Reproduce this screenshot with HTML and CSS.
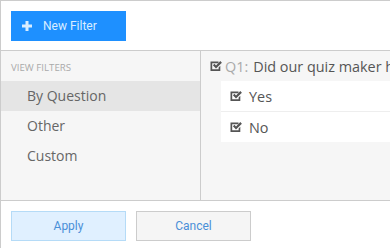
FILE: index.html
```html
<!doctype html>
<html lang="en-us">
<head>
<title>View Filters</title>
<meta http-equiv="Content-Type" content="text/html; charset=utf-8">
<link rel="stylesheet" href="styles.css">
</head>
<body>

<div class="panel">

  <div class="head">
    <button class="btn-new">
      <svg class="plus" width="10" height="10" viewBox="0 0 10 10"><path d="M3.5 0h3v3.5H10v3H6.5V10h-3V6.5H0v-3h3.5z"/></svg>
      New Filter
    </button>
  </div>

  <div class="main">
    <div class="side">
      <div class="side-title">VIEW FILTERS</div>
      <div class="side-item on">By Question</div>
      <div class="side-item">Other</div>
      <div class="side-item">Custom</div>
    </div>

    <div class="content">
      <div class="q-row">
        <svg class="chk" viewBox="0 0 12 12"><path d="M0.5 1.5h8v1.7H2.2v6.1h6.4V7.4l1.7-1.7V11H0.5z"/><path d="M2.9 5.3l1.6-1.5 1.5 1.6 4.3-4.3 1.6 1.6-5.9 5.9z"/></svg>
        <span class="qnum">Q1:</span><span class="qtxt">Did our quiz maker help you create your quiz?</span>
      </div>
      <div class="answers">
        <div class="a-row">
          <svg class="chk" viewBox="0 0 12 12"><path d="M0.5 1.5h8v1.7H2.2v6.1h6.4V7.4l1.7-1.7V11H0.5z"/><path d="M2.9 5.3l1.6-1.5 1.5 1.6 4.3-4.3 1.6 1.6-5.9 5.9z"/></svg>
          Yes
        </div>
        <div class="a-row">
          <svg class="chk" viewBox="0 0 12 12"><path d="M0.5 1.5h8v1.7H2.2v6.1h6.4V7.4l1.7-1.7V11H0.5z"/><path d="M2.9 5.3l1.6-1.5 1.5 1.6 4.3-4.3 1.6 1.6-5.9 5.9z"/></svg>
          No
        </div>
      </div>
    </div>
  </div>

  <div class="foot">
    <button class="btn btn-apply">Apply</button>
    <button class="btn btn-cancel">Cancel</button>
  </div>

</div>

</body>
</html>
```

FILE: styles.css
```css
BODY {
  margin: 0;
  padding: 0;
  background: #fff;
  overflow: hidden;
  font: 14px "Open Sans", Arial, sans-serif;
  color: #555;
}
.panel {
  border-top: solid 1px #ccc;
  border-left: solid 1px #ccc;
}
.head {
  height: 50px;
  padding: 10px 0 0 10px;
  box-sizing: border-box;
  border-bottom: solid 1px #ccc;
}
.btn-new {
  display: flex;
  align-items: center;
  width: 115px;
  height: 30px;
  margin: 0;
  padding: 0 0 0 11px;
  border: none;
  background: #1e90ff;
  color: #d9edff;
  font: 12px Roboto, Arial, sans-serif;
  cursor: pointer;
}
.plus {
  fill: #d9edff;
  margin: 0 11px 0 0;
}
.main {
  display: flex;
  height: 149px;
  background: #f6f6f6;
  border-bottom: solid 1px #ccc;
}
.side {
  width: 199px;
  flex: none;
  border-right: solid 1px #ccc;
}
.side-title {
  height: 30px;
  padding: 10px 0 0 10px;
  box-sizing: border-box;
  font-size: 9.7px;
  color: #aaa;
}
.side-item {
  height: 30px;
  line-height: 30px;
  padding: 0 0 0 26px;
  color: #666;
}
.side-item.on {
  background: #e5e5e5;
}
.content {
  flex: 1;
  min-width: 0;
  overflow: hidden;
}
.chk {
  width: 12px;
  height: 12px;
  fill: #555;
  margin: 0 7px 0 0;
  flex: none;
}
.q-row {
  display: flex;
  align-items: center;
  height: 30px;
  padding: 0 0 0 9px;
  white-space: nowrap;
  overflow: hidden;
  font-size: 14.4px;
  color: #555;
}
.q-row .chk {
  margin: 0 3px 0 0;
}
.qnum {
  color: #aaa;
  margin: 0 5px 0 0;
}
.qtxt {
  overflow: hidden;
}
.answers {
  margin: 0 0 0 20px;
  background: #fff;
}
.a-row {
  display: flex;
  align-items: center;
  height: 30px;
  padding: 0 0 0 9px;
  font-size: 14.4px;
  border-top: solid 1px #eee;
}
.a-row:first-child {
  border-top: none;
}
.foot {
  display: flex;
  gap: 10px;
  padding: 10px 0 0 10px;
  height: 47px;
  box-sizing: border-box;
}
.btn {
  width: 115px;
  height: 30px;
  margin: 0;
  font: 12px Roboto, Arial, sans-serif;
  color: #4a8fd8;
  cursor: pointer;
}
.btn-apply {
  background: #e0f0ff;
  border: solid 1px #b5dbf7;
}
.btn-cancel {
  background: #f5f5f5;
  border: solid 1px #ccc;
}
```
